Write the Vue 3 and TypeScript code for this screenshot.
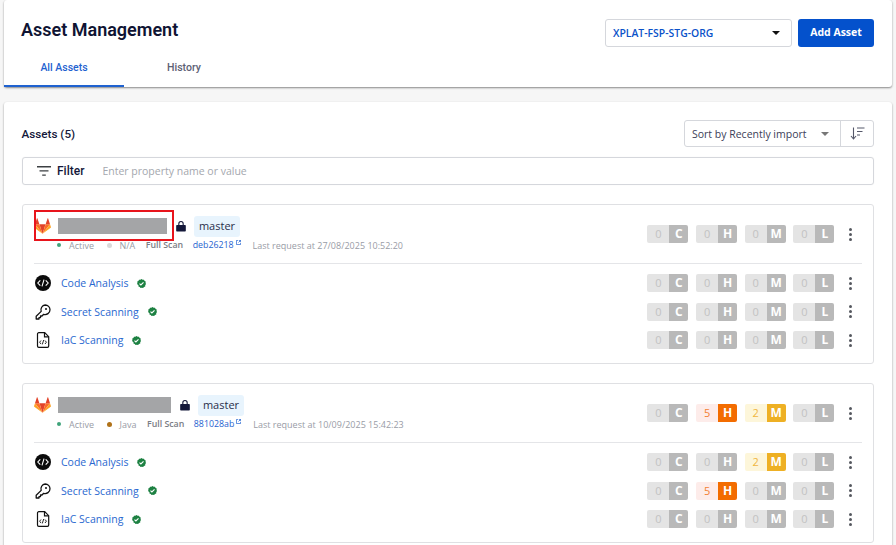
<script setup lang="ts">
interface Row { name: string; icon: string; sev: number[] }
interface Asset { first: boolean; w: number; lang: string; dot: string; sha: string; time: string; sev: number[]; rows: Row[] }
const labels = ['C', 'H', 'M', 'L']
const cls = (i: number, n: number) => (n > 0 ? 'sev-' + labels[i] : 'sev-zero')
const assets: Asset[] = [
  { first: true, w: 109, lang: 'N/A', dot: '#d9d9d9', sha: 'deb26218', time: '27/08/2025 10:52:20', sev: [0,0,0,0],
    rows: [
      { name: 'Code Analysis', icon: 'code', sev: [0,0,0,0] },
      { name: 'Secret Scanning', icon: 'key', sev: [0,0,0,0] },
      { name: 'IaC Scanning', icon: 'file', sev: [0,0,0,0] },
    ] },
  { first: false, w: 113, lang: 'Java', dot: '#b07219', sha: '881028ab', time: '10/09/2025 15:42:23', sev: [0,5,2,0],
    rows: [
      { name: 'Code Analysis', icon: 'code', sev: [0,0,2,0] },
      { name: 'Secret Scanning', icon: 'key', sev: [0,5,0,0] },
      { name: 'IaC Scanning', icon: 'file', sev: [0,0,0,0] },
    ] },
]
</script>

<template>
  <div class="page">
    <header class="top card">
      <div class="top-row">
        <h1>Asset Management</h1>
        <div class="actions">
          <div class="org"><span>XPLAT-FSP-STG-ORG</span><i class="caret dark"></i></div>
          <button class="add">Add Asset</button>
        </div>
      </div>
      <nav class="tabs">
        <a class="tab active">All Assets</a>
        <a class="tab">History</a>
      </nav>
    </header>

    <main class="list card">
      <div class="list-head">
        <h2>Assets (5)</h2>
        <div class="sort">
          <div class="sort-sel"><span>Sort by Recently import</span><i class="caret grey"></i></div>
          <div class="sort-btn">
            <svg width="15" height="13" viewBox="0 0 15 13" fill="none" stroke="#55586a" stroke-width="1.1">
              <path d="M3.500 .5v11M1 9l2.500 3L6 9"/>
              <path d="M7 1h7.500M7 4.500h5.500M7 8h3"/>
            </svg>
          </div>
        </div>
      </div>

      <div class="filter">
        <svg width="14" height="10" viewBox="0 0 14 10" fill="#3c4043"><path d="M0 0h14v1.4H0zM2.5 4.2h9v1.4h-9zM5.2 8.4h3.6v1.4H5.2z"/></svg>
        <b>Filter</b>
        <span>Enter property name or value</span>
      </div>

      <section v-for="a in assets" :key="a.sha" class="asset">
        <div v-if="a.first" class="highlight"></div>
        <div class="asset-head">
          <div class="asset-info">
            <div class="name-row">
              <svg class="fox" width="17" height="16" viewBox="0 0 24 22">
                <path fill="#e24329" d="M12 22l4.4-13.6H7.6z"/>
                <path fill="#fc6d26" d="M12 22L7.6 8.4H1.4z"/>
                <path fill="#fca326" d="M1.4 8.4L.1 12.5c-.1.4 0 .8.3 1L12 22z"/>
                <path fill="#e24329" d="M1.4 8.4h6.2L4.9.3c-.1-.4-.7-.4-.9 0z"/>
                <path fill="#fc6d26" d="M12 22l4.4-13.6h6.2z"/>
                <path fill="#fca326" d="M22.6 8.4l1.3 4.1c.1.4 0 .8-.3 1L12 22z"/>
                <path fill="#e24329" d="M22.6 8.4h-6.2L19.1.3c.1-.4.7-.4.9 0z"/>
              </svg>
              <span class="redact" :style="{ width: a.w + 'px' }"></span>
              <svg class="lock" width="10" height="12" viewBox="0 0 11 12" fill="#14183a">
                <path d="M1 5h9a.8.8 0 0 1 .8.8v5.4a.8.8 0 0 1-.8.8H1a.8.8 0 0 1-.8-.8V5.800A.8.8 0 0 1 1 5z"/>
                <path d="M2.500 5V3.400a3 3 0 0 1 6 0V5H7.300V3.400a1.800 1.800 0 0 0-3.600 0V5z"/>
              </svg>
              <span class="branch">master</span>
            </div>
            <div class="meta">
              <i class="dot" style="background:#3fa37a"></i><span class="m-status">Active</span>
              <i class="dot lang" :style="{ background: a.dot }"></i><span class="m-lang">{{ a.lang }}</span>
              <span class="m-scan">Full Scan</span>
              <a class="m-sha">{{ a.sha }}<svg width="5" height="5" viewBox="0 0 6 6" fill="none" stroke="#1f62d0" stroke-width=".9"><path d="M2.500 .5H.5v5h5V3.500M3 3l2.500-2.500M3.500 .5h2v2"/></svg></a>
              <span class="m-time">Last request at {{ a.time }}</span>
            </div>
          </div>
          <div class="sevs">
            <div v-for="(n, i) in a.sev" :key="i" class="sev" :class="cls(i, n)"><span class="num">{{ n }}</span><span class="let">{{ labels[i] }}</span></div>
            <div class="more"><i></i><i></i><i></i></div>
          </div>
        </div>
        <div class="rows">
          <div v-for="r in a.rows" :key="r.name" class="row">
            <span class="ric">
              <svg v-if="r.icon === 'code'" width="16" height="16" viewBox="0 0 16 16">
                <circle cx="8" cy="8" r="8" fill="#0b0b0b"/>
                <path d="M5.300 5.300L2.800 8l2.500 2.700M10.700 5.300L13.200 8l-2.500 2.700M9 4.600L7 11.400" fill="none" stroke="#fff" stroke-width="1.100"/>
              </svg>
              <svg v-else-if="r.icon === 'key'" width="16" height="16" viewBox="0 0 16 16" fill="none" stroke="#111" stroke-width="1.300">
                <path d="M10.200 1a4.800 4.800 0 0 1 4.800 4.800 4.800 4.800 0 0 1-6.300 4.500L7 12H5.500v1.600H4V15H1.200v-2.700l5-4.900A4.800 4.800 0 0 1 10.200 1z" stroke-linejoin="round"/>
                <circle cx="11" cy="5" r="1" fill="#111" stroke="none"/>
              </svg>
              <svg v-else width="14" height="16" viewBox="0 0 14 16" fill="none" stroke="#111" stroke-width="1.200">
                <path d="M1.500 2a1.300 1.300 0 0 1 1.300-1.300h5.900l4 4v9.300a1.300 1.300 0 0 1-1.300 1.300H2.800A1.300 1.300 0 0 1 1.500 14z"/>
                <path d="M8.500 .8v4h4"/>
                <path d="M5 8.500L3.600 10.200 5 12M9 8.500l1.400 1.700L9 12M7.700 8l-1.400 4.400" stroke-width=".9"/>
              </svg>
            </span>
            <a class="rname">{{ r.name }}</a>
            <svg class="ok" width="9" height="9" viewBox="0 0 18 18">
              <path fill="#1d8142" d="M9 0l2.300 1.500 2.700-.2 1.200 2.500 2.300 1.400-.4 2.700L18 10.200l-1.600 2.200.1 2.700-2.600.8-1.600 2.100-2.600-.7-2.600.7-1.600-2.100-2.600-.8.1-2.700L0 10.200l.9-2.300-.4-2.700 2.300-1.400L4 1.300l2.700.2z"/>
              <path d="M5 9.200l2.800 2.800L13 6.600" fill="none" stroke="#fff" stroke-width="2.200"/>
            </svg>
            <div class="sevs">
              <div v-for="(n, i) in r.sev" :key="i" class="sev" :class="cls(i, n)"><span class="num">{{ n }}</span><span class="let">{{ labels[i] }}</span></div>
              <div class="more"><i></i><i></i><i></i></div>
            </div>
          </div>
        </div>
      </section>
    </main>
  </div>
</template>

<style>
html, body { margin: 0; background: #f6f6f6; overflow: hidden; }
</style>

<style scoped>
.page { width: 896px; height: 545px; padding: 0 4px; box-sizing: border-box; overflow: hidden; font-family: "Open Sans", sans-serif; color: #14183a; }
.card { background: #fff; border-radius: 3px; box-shadow: 0 1px 2px rgba(0,0,0,.45); }
.top { height: 87px; margin-bottom: 15px; display: flex; flex-direction: column; justify-content: space-between; }
.top-row { display: flex; justify-content: space-between; padding: 19px 18px 0 17px; }
h1 { margin: 0; font: 600 18px/22px Roboto, sans-serif; color: #0f1433; }
.actions { display: flex; gap: 6px; }
.org { width: 187px; height: 28px; box-sizing: border-box; border: 1px solid #d5d7dc; border-radius: 3px; display: flex; align-items: center; justify-content: space-between; padding: 0 11px 0 7px; font: 600 10.400px "Open Sans", sans-serif; color: #0a52c9; }
.add { width: 76px; height: 28px; background: #0451cc; color: #fff; border: 0; border-radius: 3px; font: 700 10.500px "Open Sans", sans-serif; padding: 0 0 3px; }
.caret { display: block; width: 0; height: 0; border-left: 4px solid transparent; border-right: 4px solid transparent; }
.caret.dark { border-top: 4px solid #111; }
.caret.grey { border-top: 4px solid #777; }
.tabs { display: flex; }
.tab { width: 120px; height: 40px; box-sizing: border-box; padding-top: 14px; text-align: center; font: 500 10.500px/14px Roboto, sans-serif; color: #5c6074; }
.tab.active { color: #1f62d0; border-bottom: 2px solid #1f62d0; }
.list { padding: 18px 18px 0 18px; height: 460px; box-sizing: border-box; }
.list-head { display: flex; justify-content: space-between; align-items: center; height: 27px; }
h2 { margin: 0 0 0 -0.5px; font: 500 11.700px Roboto, sans-serif; color: #14183a; }
.sort { display: flex; height: 27px; box-sizing: border-box; border: 1px solid #d5d7dc; border-radius: 3px; }
.sort-sel { width: 156px; display: flex; align-items: center; justify-content: space-between; padding: 0 11px 0 7px; box-sizing: border-box; border-right: 1px solid #d5d7dc; font-size: 10.500px; color: #3c4058; white-space: nowrap; }
.sort-btn { width: 32px; display: flex; align-items: center; justify-content: center; }
.filter { margin-top: 10px; height: 28px; box-sizing: border-box; border: 1px solid #d5d7dc; border-radius: 3px; display: flex; align-items: center; padding-left: 14px; box-shadow: 0 0 1px rgba(0,0,0,.1); }
.filter b { font: 500 12px Roboto, sans-serif; color: #14183a; margin-left: 6px; }
.filter span { font-size: 10.500px; color: #a4a7ae; margin-left: 18px; }
.asset { position: relative; margin-top: 19px; height: 160px; box-sizing: border-box; border: 1px solid #dfe0e3; border-radius: 3px; padding: 0 11px; }
.highlight { position: absolute; left: 11px; top: 5px; width: 140px; height: 31px; box-sizing: border-box; border: 2px solid #e8141c; }
.asset-head { display: flex; justify-content: space-between; align-items: center; height: 58px; border-bottom: 1px solid #e4e5e8; }
.asset-info { align-self: flex-start; }
.name-row { display: flex; align-items: center; height: 26px; margin-top: 8px; }
.redact { height: 16px; margin-left: 7px; background: #a4a5a7; }
.lock { margin-left: 9px; }
.branch { margin-left: 8px; width: 46px; height: 21px; line-height: 20px; text-align: center; background: #e8f4fd; border-radius: 3px; font-size: 11px; color: #2a2e4a; }
.meta { display: flex; align-items: center; margin-left: 23px; height: 12px; font-size: 9px; color: #999ca6; white-space: nowrap; }
.dot { width: 4px; height: 4px; border-radius: 50%; display: block; }
.m-status { margin-left: 8px; }
.lang { margin-left: 12.500px; width: 5px; height: 5px; }
.m-lang { margin-left: 8px; }
.m-scan { margin-left: 10.500px; font-weight: 600; font-size: 8.800px; color: #7a7c84; }
.m-sha { margin-left: 9.500px; color: #1f62d0; display: inline-flex; gap: 2px; font-size: 8.800px; }
.m-sha svg { margin-top: 1px; }
.m-time { margin-left: 12px; }
.sevs { display: flex; align-items: center; margin-left: auto; gap: 7.670px; }
.sev { display: flex; height: 18px; width: 41px; border-radius: 2px; overflow: hidden; font-size: 11px; text-align: center; line-height: 18px; }
.num { width: 22px; }
.let { width: 19px; font-weight: 700; font-size: 12px; color: #fff; }
.sev-zero .num { background: #e4e4e4; color: #c2c2c2; }
.sev-zero .let { background: #b9b9b9; }
.sev-H .num { background: #fdecea; color: #f37f33; }
.sev-H .let { background: #f36c00; }
.sev-M .num { background: #fdf6da; color: #f0b53e; }
.sev-M .let { background: #eeb024; }
.more { width: 4px; margin-left: 6px; margin-right: 10px; display: flex; flex-direction: column; gap: 2px; align-items: center; }
.more i { width: 3px; height: 3px; border-radius: 50%; background: #55585f; display: block; }
.rows { padding-top: 5px; }
.row { height: 28.500px; display: flex; align-items: center; }
.ric { width: 16px; margin-left: 1px; display: flex; justify-content: center; }
.rname { margin-left: 10px; font-size: 10.500px; color: #2a68cf; }
.ok { margin-left: 9px; }
</style>
